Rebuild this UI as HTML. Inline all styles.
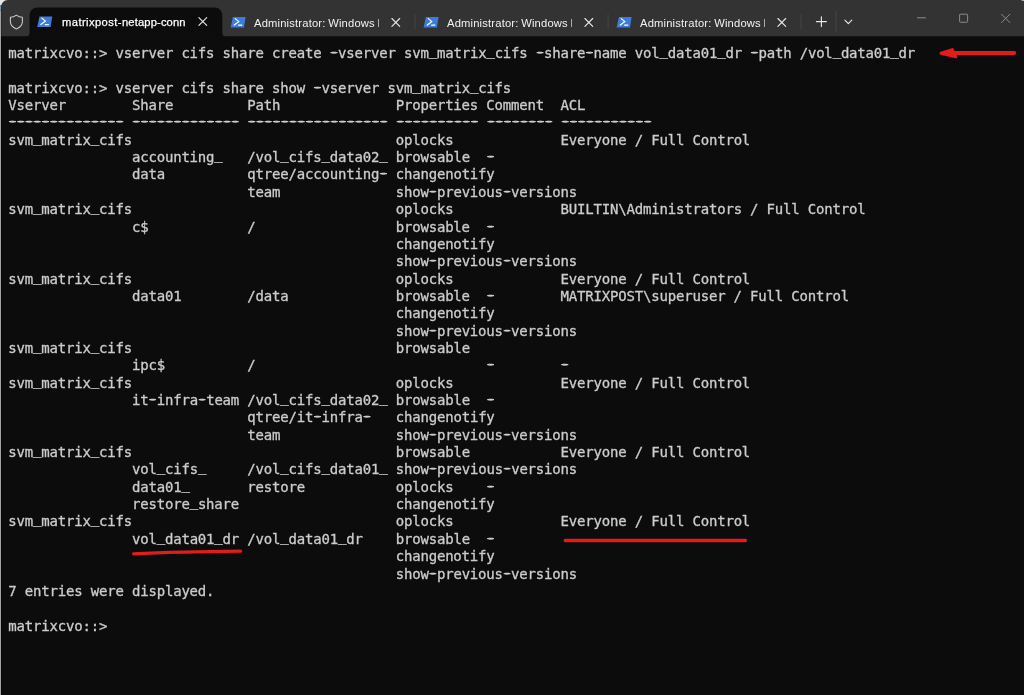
<!DOCTYPE html>
<html><head><meta charset="utf-8"><title>Windows Terminal</title>
<style>
html,body{margin:0;padding:0;background:#0c0c0c;overflow:hidden}
body{width:1024px;height:695px;position:relative;font-family:"Liberation Sans",sans-serif}
svg{position:absolute;left:0;top:0}
.tt{position:absolute;top:14.5px;height:16px;line-height:16px;font-size:11.2px;color:#f2f2f2;white-space:nowrap;overflow:hidden;will-change:transform}
#term{position:absolute;left:0;top:0;width:1024px;height:695px;will-change:transform;-webkit-text-stroke:0.3px #cccccc;color:#cccccc;font-family:"DejaVu Sans Mono","Liberation Mono",monospace;font-size:14px;letter-spacing:-0.1866px}
.ln{position:absolute;left:8.3px;white-space:pre;height:17.36px;line-height:17.36px}
.h{position:relative;top:-1px;text-shadow:-0.9px 0 #ccc,0.9px 0 #ccc,-1.7px 0 #ccc,1.7px 0 #ccc}
.u{position:relative;top:-3px}
</style></head><body>
<svg width="1024" height="695" viewBox="0 0 1024 695">
<rect x="0" y="0" width="8" height="5.2" fill="#e6e6e6"/><rect x="0" y="5.2" width="8" height="5.3" fill="#7396b8"/>
<rect x="0" y="10.5" width="1.15" height="685" fill="#a3a3a3"/>
<path d="M1.15 36.25V6.8A6.6 6.6 0 0 1 7.75 0.0H1021.4L1024 1.1V36.25Z" fill="#333333"/>
<rect x="1021.6" y="0" width="2.4" height="0.9" fill="#bdbdbd"/>
<rect x="1.15" y="6" width="0.9" height="30.25" fill="#272727"/><rect x="1.15" y="36.25" width="0.9" height="658.75" fill="#030303"/>
<path d="M26.0 36.25A3.6 3.6 0 0 0 29.6 32.65V15.1A7.5 7.5 0 0 1 37.1 7.6H214.85A7.5 7.5 0 0 1 222.35 15.1V32.65A3.6 3.6 0 0 0 225.95 36.25V36.75H26.0Z" fill="#0c0c0c"/>
<path transform="translate(7.4 13)" d="M9 2.1C10.7 3.4 12.8 4.2 15 4.3V8.6C15 12.1 12.6 14.6 9 15.9C5.4 14.6 3 12.1 3 8.6V4.3C5.2 4.2 7.3 3.4 9 2.1Z" fill="none" stroke="#c8c8c8" stroke-width="1.1" stroke-linejoin="round"/>
<g transform="translate(37.2 16.4)"><path d="M2.3 0H15L13.4 10.7H0Z" fill="#3d7bdc"/><path d="M4.6 1.7L8.3 4.7L3.7 8.2" fill="none" stroke="#fff" stroke-width="1.2" stroke-linecap="round" stroke-linejoin="round"/><path d="M8 8.2H11.2" stroke="#fff" stroke-width="1.3" stroke-linecap="round"/></g>
<path d="M198.90 17.60L206.70 25.40M206.70 17.60L198.90 25.40" stroke="#e6e6e6" stroke-width="1.15" stroke-linecap="round"/>
<g transform="translate(230.6 16.9)"><path d="M2.3 0H15L13.4 10.7H0Z" fill="#3d7bdc"/><path d="M4.6 1.7L8.3 4.7L3.7 8.2" fill="none" stroke="#fff" stroke-width="1.2" stroke-linecap="round" stroke-linejoin="round"/><path d="M8 8.2H11.2" stroke="#fff" stroke-width="1.3" stroke-linecap="round"/></g>
<path d="M391.90 18.50L399.70 26.30M399.70 18.50L391.90 26.30" stroke="#e6e6e6" stroke-width="1.15" stroke-linecap="round"/>
<rect x="414.35" y="14.5" width="1.3" height="14.50" fill="#414141"/>
<g transform="translate(423.6 16.9)"><path d="M2.3 0H15L13.4 10.7H0Z" fill="#3d7bdc"/><path d="M4.6 1.7L8.3 4.7L3.7 8.2" fill="none" stroke="#fff" stroke-width="1.2" stroke-linecap="round" stroke-linejoin="round"/><path d="M8 8.2H11.2" stroke="#fff" stroke-width="1.3" stroke-linecap="round"/></g>
<path d="M584.90 18.50L592.70 26.30M592.70 18.50L584.90 26.30" stroke="#e6e6e6" stroke-width="1.15" stroke-linecap="round"/>
<rect x="607.45" y="14.5" width="1.3" height="14.50" fill="#414141"/>
<g transform="translate(616.6 16.9)"><path d="M2.3 0H15L13.4 10.7H0Z" fill="#3d7bdc"/><path d="M4.6 1.7L8.3 4.7L3.7 8.2" fill="none" stroke="#fff" stroke-width="1.2" stroke-linecap="round" stroke-linejoin="round"/><path d="M8 8.2H11.2" stroke="#fff" stroke-width="1.3" stroke-linecap="round"/></g>
<path d="M777.90 18.50L785.70 26.30M785.70 18.50L777.90 26.30" stroke="#e6e6e6" stroke-width="1.15" stroke-linecap="round"/>
<rect x="800.45" y="14.5" width="1.3" height="14.50" fill="#414141"/>
<path d="M821.4 16.7V26.6M816.4 21.6H826.4" stroke="#e6e6e6" stroke-width="1.15" stroke-linecap="round"/>
<rect x="835.25" y="10.9" width="1.3" height="21.70" fill="#414141"/>
<path d="M844.9 20.2L848.35 23.7L851.8 20.2" fill="none" stroke="#e6e6e6" stroke-width="1.15" stroke-linecap="round" stroke-linejoin="round"/>
<path d="M917 17.8H926" stroke="#8c8c8c" stroke-width="1"/>
<rect x="959.6" y="14.2" width="8" height="8.05" rx="0.7" fill="none" stroke="#8c8c8c" stroke-width="1"/>
<path d="M1001.3 14L1010.1 22.8M1010.1 14L1001.3 22.8" stroke="#8c8c8c" stroke-width="1"/>
</svg>
<div class="tt" style="left:61.7px;top:13.5px;width:123.6px;color:#fff;letter-spacing:0.42px;-webkit-text-stroke:0.25px #fff">matrixpost-<span style="letter-spacing:0.14px">netapp-conn</span></div>
<div class="tt" style="left:254.4px;width:124.8px;word-spacing:-0.65px;letter-spacing:0.18px">Administrator: Windows PowerShell</div>
<div class="tt" style="left:447.4px;width:124.8px;word-spacing:-0.65px;letter-spacing:0.18px">Administrator: Windows PowerShell</div>
<div class="tt" style="left:640.4px;width:124.8px;word-spacing:-0.65px;letter-spacing:0.18px">Administrator: Windows PowerShell</div>
<div id="term">
<div class="ln" style="top:45.00px">matrixcvo::&gt; vserver cifs share create <span class="h">-</span>vserver svm<span class="u">_</span>matrix<span class="u">_</span>cifs <span class="h">-</span>share<span class="h">-</span>name vol<span class="u">_</span>data01<span class="u">_</span>dr <span class="h">-</span>path /vol<span class="u">_</span>data01<span class="u">_</span>dr</div>
<div class="ln" style="top:79.70px">matrixcvo::&gt; vserver cifs share show <span class="h">-</span>vserver svm<span class="u">_</span>matrix<span class="u">_</span>cifs</div>
<div class="ln" style="top:97.05px">Vserver        Share         Path              Properties Comment  ACL</div>
<div class="ln" style="top:114.40px"><span class="h">-</span><span class="h">-</span><span class="h">-</span><span class="h">-</span><span class="h">-</span><span class="h">-</span><span class="h">-</span><span class="h">-</span><span class="h">-</span><span class="h">-</span><span class="h">-</span><span class="h">-</span><span class="h">-</span><span class="h">-</span> <span class="h">-</span><span class="h">-</span><span class="h">-</span><span class="h">-</span><span class="h">-</span><span class="h">-</span><span class="h">-</span><span class="h">-</span><span class="h">-</span><span class="h">-</span><span class="h">-</span><span class="h">-</span><span class="h">-</span> <span class="h">-</span><span class="h">-</span><span class="h">-</span><span class="h">-</span><span class="h">-</span><span class="h">-</span><span class="h">-</span><span class="h">-</span><span class="h">-</span><span class="h">-</span><span class="h">-</span><span class="h">-</span><span class="h">-</span><span class="h">-</span><span class="h">-</span><span class="h">-</span><span class="h">-</span> <span class="h">-</span><span class="h">-</span><span class="h">-</span><span class="h">-</span><span class="h">-</span><span class="h">-</span><span class="h">-</span><span class="h">-</span><span class="h">-</span><span class="h">-</span> <span class="h">-</span><span class="h">-</span><span class="h">-</span><span class="h">-</span><span class="h">-</span><span class="h">-</span><span class="h">-</span><span class="h">-</span> <span class="h">-</span><span class="h">-</span><span class="h">-</span><span class="h">-</span><span class="h">-</span><span class="h">-</span><span class="h">-</span><span class="h">-</span><span class="h">-</span><span class="h">-</span><span class="h">-</span></div>
<div class="ln" style="top:131.75px">svm<span class="u">_</span>matrix<span class="u">_</span>cifs                                oplocks             Everyone / Full Control</div>
<div class="ln" style="top:149.11px">               accounting<span class="u">_</span>   /vol<span class="u">_</span>cifs<span class="u">_</span>data02<span class="u">_</span> browsable  <span class="h">-</span></div>
<div class="ln" style="top:166.46px">               data          qtree/accounting<span class="h">-</span> changenotify</div>
<div class="ln" style="top:183.81px">                             team              show<span class="h">-</span>previous<span class="h">-</span>versions</div>
<div class="ln" style="top:201.16px">svm<span class="u">_</span>matrix<span class="u">_</span>cifs                                oplocks             BUILTIN\Administrators / Full Control</div>
<div class="ln" style="top:218.51px">               c$            /                 browsable  <span class="h">-</span></div>
<div class="ln" style="top:235.86px">                                               changenotify</div>
<div class="ln" style="top:253.21px">                                               show<span class="h">-</span>previous<span class="h">-</span>versions</div>
<div class="ln" style="top:270.56px">svm<span class="u">_</span>matrix<span class="u">_</span>cifs                                oplocks             Everyone / Full Control</div>
<div class="ln" style="top:287.91px">               data01        /data             browsable  <span class="h">-</span>        MATRIXPOST\superuser / Full Control</div>
<div class="ln" style="top:305.26px">                                               changenotify</div>
<div class="ln" style="top:322.62px">                                               show<span class="h">-</span>previous<span class="h">-</span>versions</div>
<div class="ln" style="top:339.97px">svm<span class="u">_</span>matrix<span class="u">_</span>cifs                                browsable</div>
<div class="ln" style="top:357.32px">               ipc$          /                            <span class="h">-</span>        <span class="h">-</span></div>
<div class="ln" style="top:374.67px">svm<span class="u">_</span>matrix<span class="u">_</span>cifs                                oplocks             Everyone / Full Control</div>
<div class="ln" style="top:392.02px">               it<span class="h">-</span>infra<span class="h">-</span>team /vol<span class="u">_</span>cifs<span class="u">_</span>data02<span class="u">_</span> browsable  <span class="h">-</span></div>
<div class="ln" style="top:409.37px">                             qtree/it<span class="h">-</span>infra<span class="h">-</span>   changenotify</div>
<div class="ln" style="top:426.72px">                             team              show<span class="h">-</span>previous<span class="h">-</span>versions</div>
<div class="ln" style="top:444.07px">svm<span class="u">_</span>matrix<span class="u">_</span>cifs                                browsable           Everyone / Full Control</div>
<div class="ln" style="top:461.42px">               vol<span class="u">_</span>cifs<span class="u">_</span>     /vol<span class="u">_</span>cifs<span class="u">_</span>data01<span class="u">_</span> show<span class="h">-</span>previous<span class="h">-</span>versions</div>
<div class="ln" style="top:478.77px">               data01<span class="u">_</span>       restore           oplocks    <span class="h">-</span></div>
<div class="ln" style="top:496.13px">               restore<span class="u">_</span>share                   changenotify</div>
<div class="ln" style="top:513.48px">svm<span class="u">_</span>matrix<span class="u">_</span>cifs                                oplocks             Everyone / Full Control</div>
<div class="ln" style="top:530.83px">               vol<span class="u">_</span>data01<span class="u">_</span>dr /vol<span class="u">_</span>data01<span class="u">_</span>dr    browsable  <span class="h">-</span></div>
<div class="ln" style="top:548.18px">                                               changenotify</div>
<div class="ln" style="top:565.53px">                                               show<span class="h">-</span>previous<span class="h">-</span>versions</div>
<div class="ln" style="top:582.88px">7 entries were displayed.</div>
<div class="ln" style="top:617.58px">matrixcvo::&gt;</div>
</div>
<svg width="1024" height="695" viewBox="0 0 1024 695" style="pointer-events:none">
<g fill="none" stroke="#e21b1b" stroke-linecap="round" stroke-linejoin="round">
<path d="M1014.3 53C990 53 970 52.9 947 53" stroke-width="3.9"/>
<path d="M941 53.3L952.3 49.6L955.6 56.8Z" fill="#e21b1b" stroke-width="3"/>
<path d="M133.6 553.8C160 552.6 200 551.6 240.6 551.2" stroke-width="3.3"/>
<path d="M565.2 540.5H745.4" stroke-width="3.3"/>
</g></svg>
</body></html>
